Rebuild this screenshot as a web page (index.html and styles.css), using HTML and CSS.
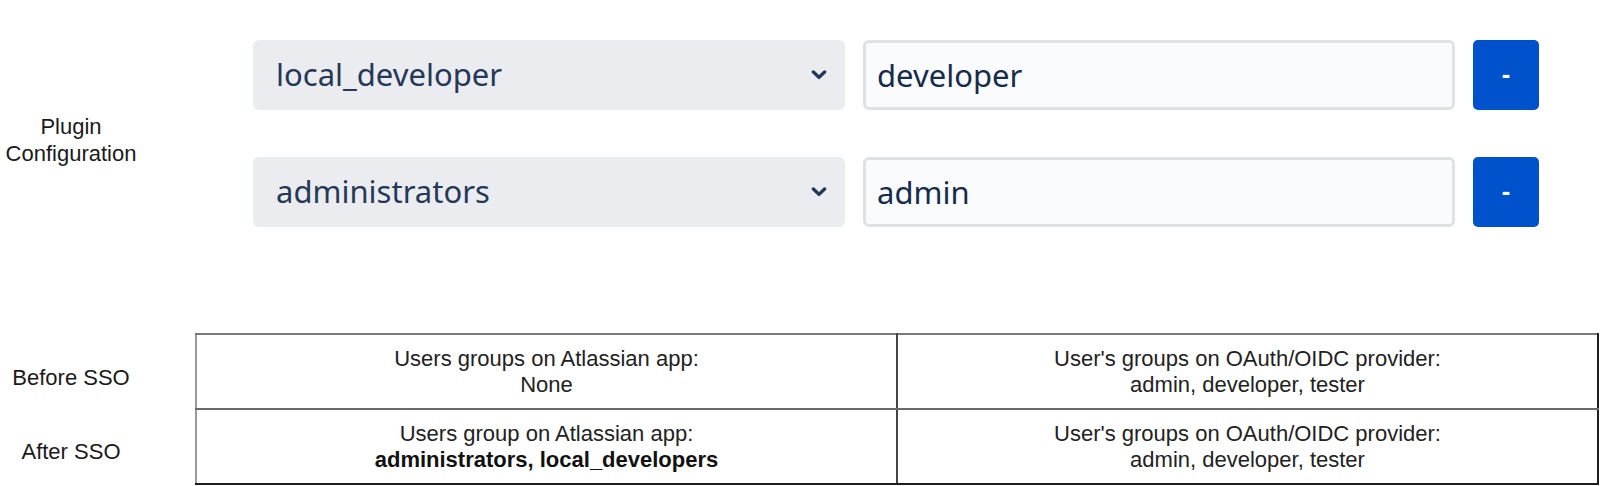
FILE: index.html
```html
<!DOCTYPE html>
<html>
<head>
<meta charset="utf-8">
<link rel="stylesheet" href="styles.css">
</head>
<body>
<section class="config">
  <div class="side-label">Plugin<br>Configuration</div>
  <div class="mappings">
    <div class="map-row">
      <div class="select">
        <span class="select-text">local_developer</span>
        <svg class="chevron" width="16" height="12" viewBox="0 0 16 12"><path d="M2.4 3 L8 8.4 L13.6 3" fill="none" stroke="#253858" stroke-width="3.4" stroke-linecap="round" stroke-linejoin="round"/></svg>
      </div>
      <div class="input">developer</div>
      <button class="remove">-</button>
    </div>
    <div class="map-row">
      <div class="select">
        <span class="select-text">administrators</span>
        <svg class="chevron" width="16" height="12" viewBox="0 0 16 12"><path d="M2.4 3 L8 8.4 L13.6 3" fill="none" stroke="#253858" stroke-width="3.4" stroke-linecap="round" stroke-linejoin="round"/></svg>
      </div>
      <div class="input">admin</div>
      <button class="remove">-</button>
    </div>
  </div>
</section>

<section class="compare">
  <div class="row-labels">
    <div class="row-label">Before SSO</div>
    <div class="row-label">After SSO</div>
  </div>
  <table class="groups">
    <tr class="first">
      <td>Users groups on Atlassian app:<br>None</td>
      <td>User's groups on OAuth/OIDC provider:<br>admin, developer, tester</td>
    </tr>
    <tr>
      <td>Users group on Atlassian app:<br><b>administrators, local_developers</b></td>
      <td>User's groups on OAuth/OIDC provider:<br>admin, developer, tester</td>
    </tr>
  </table>
</section>
</body>
</html>
```

FILE: styles.css
```css
html, body {
  margin: 0;
  padding: 0;
  background: #ffffff;
}

body {
  width: 1600px;
  height: 486px;
  overflow: hidden;
  font-family: "Liberation Sans", Arial, sans-serif;
  color: #1a1a1a;
}

.config {
  display: flex;
  align-items: center;
  padding-top: 40px;
}

.side-label {
  width: 142px;
  text-align: center;
  font-size: 22px;
  line-height: 27px;
  color: #1a1a1a;
  margin-top: 12px;
}

.mappings {
  margin-left: 111px;
  display: flex;
  flex-direction: column;
  gap: 47px;
}

.map-row {
  display: flex;
  gap: 18px;
  height: 70px;
}

.select {
  width: 592px;
  box-sizing: border-box;
  background: #ebecf0;
  border-radius: 6px;
  padding: 0 18px 0 23px;
  display: flex;
  align-items: center;
  justify-content: space-between;
  font-family: "Noto Sans", "Open Sans", sans-serif;
  font-size: 31px;
  color: #253858;
}

.select-text {
  margin-top: -2px;
}

.chevron {
  display: block;
}

.input {
  width: 592px;
  box-sizing: border-box;
  background: #fafbfc;
  border: 3px solid #dfe1e6;
  border-radius: 6px;
  padding: 0 11px;
  display: flex;
  align-items: center;
  font-family: "Noto Sans", "Open Sans", sans-serif;
  font-size: 31px;
  color: #172b4d;
}

.remove {
  width: 66px;
  border: none;
  border-radius: 5px;
  background: #0052cc;
  color: #ffffff;
  font-family: "Noto Sans", sans-serif;
  font-size: 25px;
  font-weight: bold;
  padding: 0 0 4px 0;
  margin: 0;
}

.compare {
  display: flex;
  margin-top: 106px;
}

.row-labels {
  width: 142px;
  display: flex;
  flex-direction: column;
}

.row-label {
  height: 74px;
  display: flex;
  align-items: center;
  justify-content: center;
  font-size: 22px;
  padding-top: 16px;
  box-sizing: border-box;
  color: #1a1a1a;
}

.groups {
  margin-left: 53px;
  width: 1404px;
  border-collapse: collapse;
  table-layout: fixed;
  font-size: 22px;
  line-height: 26px;
  color: #222222;
}

.groups td {
  height: 73px;
  padding: 0;
  text-align: center;
  vertical-align: middle;
  border: 2px solid #1e1e1e;
}

.groups tr.first td {
  border-top-color: #7a7a7a;
  border-bottom-color: #6a6a6a;
}

.groups td:first-child {
  border-left-color: #9a9a9a;
  border-right-color: #444444;
}

.groups b {
  font-weight: bold;
  color: #111111;
}
```
